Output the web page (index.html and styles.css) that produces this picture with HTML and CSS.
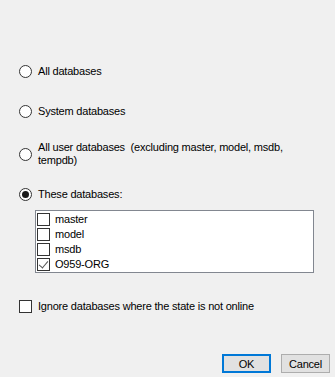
FILE: index.html
```html
<!DOCTYPE html>
<html lang="en">
<head>
  <meta charset="UTF-8" />
  <title>Select databases</title>
  <link rel="stylesheet" href="styles.css">
</head>
<body>

  <div class="dialog">
    <!-- database scope -->
    <div class="choices">
      <label class="choice choice-all">
        <input type="radio" name="scope">
        <span class="choice-text">All databases</span>
      </label>
      <label class="choice choice-system">
        <input type="radio" name="scope">
        <span class="choice-text">System databases</span>
      </label>
      <label class="choice choice-user">
        <input type="radio" name="scope">
        <span class="choice-text wrap">All user databases&nbsp; (excluding master, model, msdb, tempdb)</span>
      </label>
      <label class="choice choice-these">
        <input type="radio" name="scope" checked>
        <span class="choice-text">These databases:</span>
      </label>
    </div>

    <div class="db-list">
      <label class="db-item"><input type="checkbox"><span>master</span></label>
      <label class="db-item"><input type="checkbox"><span>model</span></label>
      <label class="db-item"><input type="checkbox"><span>msdb</span></label>
      <label class="db-item"><input type="checkbox" checked><span>O959-ORG</span></label>
    </div>

    <label class="ignore-row">
      <input type="checkbox">
      <span>Ignore databases where the state is not online</span>
    </label>

    <div class="buttons">
      <button type="button" class="btn btn-default">OK</button>
      <button type="button" class="btn">Cancel</button>
    </div>
  </div>

</body>
</html>
```

FILE: styles.css
```css
* {
  box-sizing: border-box;
  margin: 0;
  padding: 0;
}

body {
  background: #f0f0f0;
  font-family: 'Liberation Sans', Arial, sans-serif;
  font-size: 11px;
  letter-spacing: -0.2px;
  color: #000;
}

.dialog {
  width: 335px;
  height: 377px;
  padding: 65px 0 0 19px;
}

.choices {
  display: flex;
  flex-direction: column;
}

.choice {
  display: flex;
  align-items: center;
  gap: 6px;
  line-height: 13px;
}

.choice-system {
  margin-top: 27px;
}

.choice-user {
  margin-top: 23px;
}

.choice-these {
  margin-top: 21px;
}

.choice-text.wrap {
  width: 265px;
}

input[type="radio"] {
  appearance: none;
  -webkit-appearance: none;
  flex: none;
  width: 13px;
  height: 13px;
  border: 1px solid #333;
  border-radius: 50%;
  background: #fff;
  display: grid;
  place-items: center;
}

input[type="radio"]:checked::after {
  content: "";
  width: 7px;
  height: 7px;
  border-radius: 50%;
  background: #1a1a1a;
}

input[type="checkbox"] {
  appearance: none;
  -webkit-appearance: none;
  flex: none;
  width: 13px;
  height: 13px;
  border: 1px solid #333;
  background: #fff;
  position: relative;
}

input[type="checkbox"]:checked::after {
  content: "";
  position: absolute;
  left: 3px;
  top: 0;
  width: 4px;
  height: 8px;
  border: solid #555;
  border-width: 0 1px 1px 0;
  transform: rotate(40deg);
}

.db-list {
  margin: 9px 0 0 16px;
  width: 279px;
  height: 63px;
  border: 1px solid #828790;
  background: #fff;
  padding: 1px 0 0 1px;
}

.db-item {
  display: flex;
  align-items: center;
  gap: 5px;
  height: 15px;
  line-height: 15px;
}

.ignore-row {
  display: flex;
  align-items: center;
  gap: 6px;
  margin-top: 27px;
  line-height: 13px;
}

.buttons {
  display: flex;
  gap: 10px;
  margin: 41px 0 0 203px;
}

.btn {
  width: 49px;
  height: 19px;
  background: #e1e1e1;
  border: 1px solid #adadad;
  font-family: inherit;
  font-size: 11px;
  letter-spacing: inherit;
  color: #000;
}

.btn-default {
  border: 2px solid #0078d7;
}
```
